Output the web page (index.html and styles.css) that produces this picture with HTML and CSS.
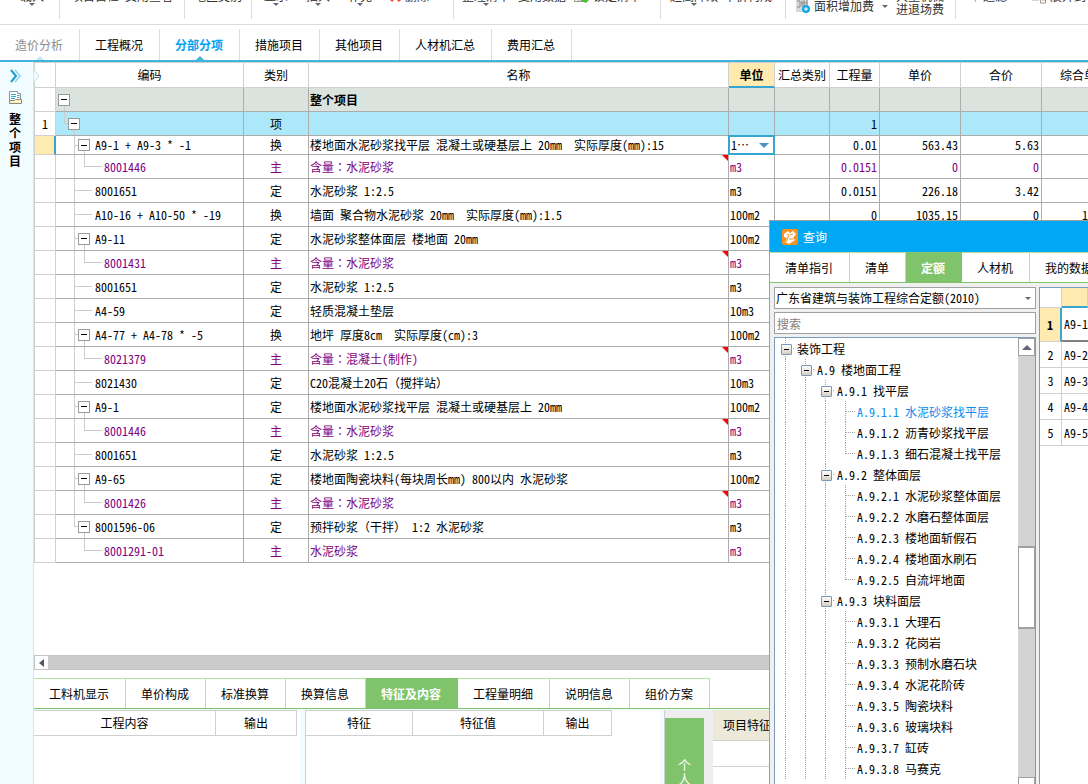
FILE: index.html
```html
<!DOCTYPE html>
<html lang="zh-CN">
<head>
<meta charset="utf-8">
<title>分部分项</title>
<link rel="stylesheet" href="styles.css">
</head>
<body>
<header class="toolbar">
  <div class="group g-import"><button class="tool drop">载入</button></div>
  <div class="group g-check"><button class="tool">项目自检</button><button class="tool">费用查看</button></div>
  <div class="group g-area"><button class="tool">地区类别</button></div>
  <div class="group g-edit"><button class="tool drop">显示</button><button class="tool drop">插入</button><button class="tool drop">补充</button><button class="tool"><svg width="12" height="12" viewBox="0 0 12 12"><path d="M1 1l9 10M10 1L1 11" stroke="#f04a32" stroke-width="3"/></svg>删除</button></div>
  <div class="group g-list"><button class="tool drop">整理清单</button><button class="tool">复用数据</button><button class="tool"><svg width="16" height="13" viewBox="0 0 16 13"><path d="M.5.5h10v11H.5zM.5 8h10M5 0v12" fill="#eee" stroke="#999"/><path d="M7 5h8v5l-3 3-5-2z" fill="#4fbf35"/></svg>锁定清单</button></div>
  <div class="group g-height"><button class="tool drop">超高降效</button><button class="tool">单价构成</button></div>
  <div class="group g-fee">
    <button class="tool low"><svg width="16" height="16" viewBox="0 0 16 16"><path d="M1 0h12v14H1z" fill="#d9d9d9"/><path d="M2 3h3v6H2m5-6v6m2-7v7m3-7v7M6 5h6" stroke="#8b8b8b" fill="none"/><circle cx="11" cy="11" r="4" fill="#10a9e6"/><path d="M11 9v4M9 11h4" stroke="#fff"/></svg>面积增加费</button>
    <i class="caret"></i>
    <button class="tool two">大型机械<br>进退场费</button>
  </div>
  <div class="group g-view"><button class="tool"><svg width="12" height="16" viewBox="0 0 12 16"><path d="M2 4h6v11z" fill="#65d5f3"/></svg>过滤</button><button class="tool"><svg width="16" height="16" viewBox="0 0 16 16"><path d="M1 11h7" stroke="#aaa" stroke-width="3"/><path d="M9.500 3h5v12h-5zM11 12h3" fill="#fff" stroke="#a09888"/></svg>展开到</button></div>
</header>
<nav class="tabs main-tabs">
  <button class="tab visited">造价分析</button><button class="tab">工程概况</button><button class="tab active">分部分项</button><button class="tab">措施项目</button><button class="tab">其他项目</button><button class="tab">人材机汇总</button><button class="tab">费用汇总</button>
</nav>
<div class="workspace">
  <aside class="side">
    <svg width="11" height="14" viewBox="0 0 11 14" fill="none"><path d="M1 1l5 6-5 6" stroke="#1f9fcd" stroke-width="2"/><path d="M5 1l5 6-5 6" stroke="#8ad4ec" stroke-width="1.500"/></svg>
    <svg width="13" height="13" viewBox="0 0 13 13" fill="none"><path d="M.5 9.500v-9h8v2h3v7" fill="#fff" stroke="#8a959a"/><path d="M2 3.500h5M2 5.500h5M2 7.500h4M8 4.500h2.500M8 6.500h2.500" stroke="#35a8d6"/><path d="M.5 9.500h5l1-1h6v4H.5z" fill="#fff2c0" stroke="#8a8a80"/></svg>
    <span class="side-title">整个项目</span>
  </aside>
  <main class="content">
    <section class="grid">
      <svg class="notch" width="6" height="12" viewBox="0 0 6 12"><path d="M0 0l5 6-5 6" fill="#f0fcff" stroke="#ccd8da"/></svg>
      <table class="sheet">
        <colgroup><col class="c-no"><col class="c-code"><col class="c-type"><col><col class="c-unit"><col class="c-sum"><col class="c-qty"><col class="c-price"><col class="c-price"><col class="c-comp"></colgroup>
        <thead><tr><th></th><th>编码</th><th>类别</th><th>名称</th><th class="current">单位</th><th>汇总类别</th><th>工程量</th><th>单价</th><th>合价</th><th>综合单价</th></tr></thead>
        <tbody>
        <tr class="total"><td></td><td><div class="tree"><span class="node root"><button aria-label="折叠"></button></span></div></td><td></td><td>整个项目</td><td></td><td></td><td></td><td></td><td></td><td></td></tr>
        <tr class="item"><td>1</td><td><div class="tree"><span class="pad p0"></span><span class="elbow short"></span><span class="node"><button aria-label="折叠"></button></span></div></td><td>项</td><td></td><td></td><td></td><td>1</td><td></td><td></td><td></td></tr>
        <tr class="editing"><td></td><td><div class="tree"><span class="pad"></span><span class="tee short"></span><span class="node"><button aria-label="折叠"></button></span><span class="code">A9-1 + A9-3 * -1</span></div></td><td>换</td><td>楼地面水泥砂浆找平层 混凝土或硬基层上 20mm  实际厚度(mm):15</td><td class="unit-edit"><select aria-label="单位"><option>1…</option></select></td><td></td><td>0.01</td><td>563.43</td><td>5.63</td><td>563.43</td></tr>
        <tr class="main"><td></td><td><div class="tree"><span class="pad"></span><span class="line"></span><span class="elbow"></span><span class="sub">8001446</span></div></td><td>主</td><td class="flag">含量<span class="mid" lang="zh-TW">：</span>水泥砂浆</td><td>m3</td><td></td><td>0.0151</td><td>0</td><td>0</td><td></td></tr>
        <tr><td></td><td><div class="tree"><span class="pad"></span><span class="tee"></span><span class="code">8001651</span></div></td><td>定</td><td>水泥砂浆 1:2.5</td><td>m3</td><td></td><td>0.0151</td><td>226.18</td><td>3.42</td><td></td></tr>
        <tr><td></td><td><div class="tree"><span class="pad"></span><span class="tee"></span><span class="code">A10-16 + A10-50 * -19</span></div></td><td>换</td><td>墙面 聚合物水泥砂浆 20mm  实际厚度(mm):1.5</td><td>100m2</td><td></td><td>0</td><td>1035.15</td><td>0</td><td>1035.15</td></tr>
        <tr><td></td><td><div class="tree"><span class="pad"></span><span class="tee short"></span><span class="node"><button aria-label="折叠"></button></span><span class="code">A9-11</span></div></td><td>定</td><td>水泥砂浆整体面层 楼地面 20mm</td><td>100m2</td><td></td><td></td><td></td><td></td><td></td></tr>
        <tr class="main"><td></td><td><div class="tree"><span class="pad"></span><span class="line"></span><span class="elbow"></span><span class="sub">8001431</span></div></td><td>主</td><td class="flag">含量<span class="mid" lang="zh-TW">：</span>水泥砂浆</td><td>m3</td><td></td><td></td><td></td><td></td><td></td></tr>
        <tr><td></td><td><div class="tree"><span class="pad"></span><span class="tee"></span><span class="code">8001651</span></div></td><td>定</td><td>水泥砂浆 1:2.5</td><td>m3</td><td></td><td></td><td></td><td></td><td></td></tr>
        <tr><td></td><td><div class="tree"><span class="pad"></span><span class="tee"></span><span class="code">A4-59</span></div></td><td>定</td><td>轻质混凝土垫层</td><td>10m3</td><td></td><td></td><td></td><td></td><td></td></tr>
        <tr><td></td><td><div class="tree"><span class="pad"></span><span class="tee short"></span><span class="node"><button aria-label="折叠"></button></span><span class="code">A4-77 + A4-78 * -5</span></div></td><td>换</td><td>地坪 厚度8cm  实际厚度(cm):3</td><td>100m2</td><td></td><td></td><td></td><td></td><td></td></tr>
        <tr class="main"><td></td><td><div class="tree"><span class="pad"></span><span class="line"></span><span class="elbow"></span><span class="sub">8021379</span></div></td><td>主</td><td class="flag">含量<span class="mid" lang="zh-TW">：</span>混凝土(制作)</td><td>m3</td><td></td><td></td><td></td><td></td><td></td></tr>
        <tr><td></td><td><div class="tree"><span class="pad"></span><span class="tee"></span><span class="code">8021430</span></div></td><td>定</td><td>C20混凝土20石（搅拌站）</td><td>10m3</td><td></td><td></td><td></td><td></td><td></td></tr>
        <tr><td></td><td><div class="tree"><span class="pad"></span><span class="tee short"></span><span class="node"><button aria-label="折叠"></button></span><span class="code">A9-1</span></div></td><td>定</td><td>楼地面水泥砂浆找平层 混凝土或硬基层上 20mm</td><td>100m2</td><td></td><td></td><td></td><td></td><td></td></tr>
        <tr class="main"><td></td><td><div class="tree"><span class="pad"></span><span class="line"></span><span class="elbow"></span><span class="sub">8001446</span></div></td><td>主</td><td class="flag">含量<span class="mid" lang="zh-TW">：</span>水泥砂浆</td><td>m3</td><td></td><td></td><td></td><td></td><td></td></tr>
        <tr><td></td><td><div class="tree"><span class="pad"></span><span class="tee"></span><span class="code">8001651</span></div></td><td>定</td><td>水泥砂浆 1:2.5</td><td>m3</td><td></td><td></td><td></td><td></td><td></td></tr>
        <tr><td></td><td><div class="tree"><span class="pad"></span><span class="tee short"></span><span class="node"><button aria-label="折叠"></button></span><span class="code">A9-65</span></div></td><td>定</td><td>楼地面陶瓷块料(每块周长mm) 800以内 水泥砂浆</td><td>100m2</td><td></td><td></td><td></td><td></td><td></td></tr>
        <tr class="main"><td></td><td><div class="tree"><span class="pad"></span><span class="line"></span><span class="elbow"></span><span class="sub">8001426</span></div></td><td>主</td><td class="flag">含量<span class="mid" lang="zh-TW">：</span>水泥砂浆</td><td>m3</td><td></td><td></td><td></td><td></td><td></td></tr>
        <tr><td></td><td><div class="tree"><span class="pad"></span><span class="elbow short"></span><span class="node"><button aria-label="折叠"></button></span><span class="code">8001596-06</span></div></td><td>定</td><td>预拌砂浆（干拌） 1:2 水泥砂浆</td><td>m3</td><td></td><td></td><td></td><td></td><td></td></tr>
        <tr class="main"><td></td><td><div class="tree"><span class="pad"></span><span class="line none"></span><span class="elbow"></span><span class="sub">8001291-01</span></div></td><td>主</td><td>水泥砂浆</td><td>m3</td><td></td><td></td><td></td><td></td><td></td></tr>
        </tbody>
      </table>
    </section>
    <div class="hscroll"><button aria-label="向左"><svg width="5" height="8" viewBox="0 0 5 8"><path d="M5 0v8L0 4z" fill="#556"/></svg></button></div>
    <nav class="tabs green-tabs detail-tabs">
      <button class="tab">工料机显示</button><button class="tab">单价构成</button><button class="tab">标准换算</button><button class="tab">换算信息</button><button class="tab active">特征及内容</button><button class="tab">工程量明细</button><button class="tab">说明信息</button><button class="tab">组价方案</button>
    </nav>
    <section class="panels">
      <div class="panel p-work"><table class="mini"><thead><tr><th class="w-content">工程内容</th><th class="w-out">输出</th></tr></thead></table></div>
      <div class="panel p-feature"><table class="mini"><thead><tr><th class="w-name">特征</th><th class="w-value">特征值</th><th class="w-out2">输出</th></tr></thead></table></div>
      <div class="panel p-rail"><button class="rail">个人</button></div>
      <div class="panel p-desc"><div class="desc-head">项目特征</div><div class="desc-row"></div></div>
    </section>
  </main>
</div>
<section class="dialog" role="dialog" aria-label="查询">
  <header class="dialog-title"><svg width="16" height="16" viewBox="0 0 16 16"><rect width="16" height="16" rx="2" fill="#f7931e"/><path d="M2 5l4-3 2 2 3-2 3 3-3 4 2 2-6 4-4-2 2-4-3-1z" fill="#fff"/><path d="M5 5l2 1-3 7M8 6l3-1M7 10h4" stroke="#f7931e" fill="none"/></svg><span>查询</span></header>
  <nav class="tabs green-tabs dialog-tabs">
    <button class="tab">清单指引</button><button class="tab">清单</button><button class="tab active">定额</button><button class="tab">人材机</button><button class="tab">我的数据</button>
  </nav>
  <div class="dialog-body">
    <div class="finder">
      <div class="book-wrap"><select class="book" aria-label="定额库"><option>广东省建筑与装饰工程综合定额(2010)</option></select></div>
      <input class="search" type="text" placeholder="搜索" aria-label="搜索">
      <div class="catalog">
        <ul class="cat-list">
          <li><b class="x first"></b><span>装饰工程</span></li>
          <li><b class="v"></b><b class="x"></b><span>A.9 楼地面工程</span></li>
          <li><b class="v"></b><b class="v"></b><b class="x"></b><span>A.9.1 找平层</span></li>
          <li class="sel"><b class="v"></b><b class="v"></b><b class="v"></b><b class="t"></b><span>A.9.1.1 水泥砂浆找平层</span></li>
          <li><b class="v"></b><b class="v"></b><b class="v"></b><b class="t"></b><span>A.9.1.2 沥青砂浆找平层</span></li>
          <li><b class="v"></b><b class="v"></b><b class="v"></b><b class="e"></b><span>A.9.1.3 细石混凝土找平层</span></li>
          <li><b class="v"></b><b class="v"></b><b class="x"></b><span>A.9.2 整体面层</span></li>
          <li><b class="v"></b><b class="v"></b><b class="v"></b><b class="t"></b><span>A.9.2.1 水泥砂浆整体面层</span></li>
          <li><b class="v"></b><b class="v"></b><b class="v"></b><b class="t"></b><span>A.9.2.2 水磨石整体面层</span></li>
          <li><b class="v"></b><b class="v"></b><b class="v"></b><b class="t"></b><span>A.9.2.3 楼地面斩假石</span></li>
          <li><b class="v"></b><b class="v"></b><b class="v"></b><b class="t"></b><span>A.9.2.4 楼地面水刷石</span></li>
          <li><b class="v"></b><b class="v"></b><b class="v"></b><b class="e"></b><span>A.9.2.5 自流坪地面</span></li>
          <li><b class="v"></b><b class="v"></b><b class="x"></b><span>A.9.3 块料面层</span></li>
          <li><b class="v"></b><b class="v"></b><b class="v"></b><b class="t"></b><span>A.9.3.1 大理石</span></li>
          <li><b class="v"></b><b class="v"></b><b class="v"></b><b class="t"></b><span>A.9.3.2 花岗岩</span></li>
          <li><b class="v"></b><b class="v"></b><b class="v"></b><b class="t"></b><span>A.9.3.3 预制水磨石块</span></li>
          <li><b class="v"></b><b class="v"></b><b class="v"></b><b class="t"></b><span>A.9.3.4 水泥花阶砖</span></li>
          <li><b class="v"></b><b class="v"></b><b class="v"></b><b class="t"></b><span>A.9.3.5 陶瓷块料</span></li>
          <li><b class="v"></b><b class="v"></b><b class="v"></b><b class="t"></b><span>A.9.3.6 玻璃块料</span></li>
          <li><b class="v"></b><b class="v"></b><b class="v"></b><b class="t"></b><span>A.9.3.7 缸砖</span></li>
          <li><b class="v"></b><b class="v"></b><b class="v"></b><b class="t"></b><span>A.9.3.8 马赛克</span></li>
        </ul>
        <div class="vscroll"><button aria-label="向上"><svg width="10" height="5" viewBox="0 0 10 5"><path d="M0 5h10L5 0z" fill="#667"/></svg></button><div class="track-a"></div><div class="thumb"></div><div class="track-b"></div><button class="down" aria-label="向下"></button></div>
      </div>
    </div>
    <div class="results">
      <table class="result-table">
        <thead><tr><th></th><th class="key"></th></tr></thead>
        <tbody>
          <tr class="picked"><td>1</td><td>A9-1</td></tr>
          <tr><td>2</td><td>A9-2</td></tr>
          <tr><td>3</td><td>A9-3</td></tr>
          <tr><td>4</td><td>A9-4</td></tr>
          <tr><td>5</td><td>A9-5</td></tr>
        </tbody>
      </table>
    </div>
  </div>
</section>
</body>
</html>
```
FILE: styles.css
```css
* { box-sizing: border-box; }

:root {
  --grid: #acacac;
  --light: #d0d0d0;
  --blue: #3fb4dc;
  --edit: #37a5d0;
  --green: #7fc46a;
  --pale-green: #b5e3a0;
  --yellow: #ffebb0;
}

body {
  margin: 0;
  height: 100vh;
  overflow: hidden;
  display: flex;
  flex-direction: column;
  position: relative;
  background: #fff;
  color: #000;
  font: 12px/14px "Noto Sans Mono CJK SC", "Noto Sans CJK SC", sans-serif;
}

button, select, input { font: inherit; color: inherit; border-radius: 0; }
button { border: 0; padding: 0; background: none; white-space: nowrap; }
svg { display: block; flex: none; }
table { border-collapse: separate; border-spacing: 0; }

/* toolbar */
.toolbar { flex: none; display: flex; height: 25px; overflow: hidden; border-bottom: 1px solid #dcdcdc; color: #333; }
.group { flex: none; display: flex; align-items: flex-start; height: 19px; border-right: 1px solid #dcdcdc; gap: 6px; padding-left: 11px; }
.g-import { width: 60px; padding-left: 20px; }
.g-check { width: 125px; }
.g-area { width: 67px; padding-left: 9px; }
.g-edit { width: 202px; gap: 18px; padding-left: 12px; }
.g-list { width: 207px; padding-left: 8px; gap: 8px; }
.g-height { width: 125px; padding-left: 9px; }
.g-fee { width: 170px; gap: 8px; padding-left: 9px; }
.g-view { border: 0; gap: 24px; padding-left: 12px; }
.tool { display: flex; align-items: center; gap: 3px; position: relative; height: 14px; margin-top: -11px; }
.tool.low { height: 16px; margin-top: -2px; }
.tool.two { display: block; height: auto; margin-top: -11px; line-height: 13px; }
.drop::after, .caret { content: ""; border: 3px solid transparent; border-top-color: #667; border-bottom: 0; }
.drop::after { position: absolute; left: calc(50% - 3px); top: 14px; }
.caret { margin-top: 5px; }

/* tab strips */
.tabs { flex: none; display: flex; }
.tab { position: relative; padding: 0 16px 0 15px; border-right: 1px solid #dcdcdc; }
.main-tabs { height: 37px; padding-top: 4px; border-bottom: 2px solid var(--blue); }
.main-tabs .visited { color: #8a8a8a; }
.main-tabs .active { color: #00a2f0; font-weight: bold; }
.main-tabs .visited::after, .main-tabs .active::after {
  content: ""; position: absolute; left: calc(50% - 4px); bottom: 0;
  border: 4px solid transparent; border-top: 0; border-bottom-color: #c0e6f3;
}
.main-tabs .active::after { border-bottom-color: var(--blue); }
.green-tabs { height: 31px; border-bottom: 1px solid var(--green); }
.green-tabs .tab { border-top: 1px solid var(--pale-green); border-right-color: var(--pale-green); }
.green-tabs .active { background: var(--green); border-color: var(--green); color: #fff; font-weight: bold; }

/* workspace */
.workspace { flex: 1; min-height: 0; display: flex; }
.side { flex: none; width: 34px; display: flex; flex-direction: column; align-items: center; gap: 8px; padding: 7px 3px 0 0; background: #f0fcff; border-right: 1px solid #dde4e6; }
.side-title { width: 12px; font-weight: bold; word-break: break-all; white-space: normal; }
.content { flex: 1; min-width: 0; display: flex; flex-direction: column; }
.grid { position: relative; flex: 1; min-height: 0; overflow: hidden; }
.notch { position: absolute; left: 0; top: 8px; }

/* bill of quantities */
.sheet { width: calc(100% + 39px); table-layout: fixed; border-top: 1px solid var(--light); white-space: pre; }
.c-no { width: 22px; }
.c-code { width: 188px; }
.c-type { width: 65px; }
.c-unit { width: 46px; }
.c-sum { width: 55px; }
.c-qty { width: 50px; }
.c-price { width: 81px; }
.c-comp { width: 85px; }
.sheet th, .sheet td { padding: 0; border: 0 solid var(--grid); border-width: 0 1px 1px 0; overflow: hidden; }
.sheet th { height: 25px; font-weight: normal; border-color: var(--light); }
.sheet th.current { background: var(--yellow); font-weight: bold; border-bottom: 2px solid var(--edit); }
.sheet td { height: 24px; }
.sheet th:first-child, .sheet td:first-child { border-left: 1px solid var(--light); border-color: var(--light); text-align: center; }
.sheet td:nth-child(3) { text-align: center; }
.sheet td:nth-child(4), .sheet td:nth-child(5) { padding-left: 1px; }
.sheet td:nth-child(n+7) { text-align: right; padding-right: 2px; }
.total td:nth-child(n+2) { background: #dae3de; font-weight: bold; }
.item td:nth-child(n+2) { background: #ade8fa; }
.sheet .editing td { height: 19px; }
.sheet .editing td:first-child { background: var(--yellow); border-right: 2px solid var(--edit); }
.main { color: #800080; }
.mid { font-family: "Noto Sans Mono CJK TC", "Noto Sans CJK TC", sans-serif; }
.flag { position: relative; }
.flag::after { content: ""; position: absolute; right: 0; top: 0; border: 3px solid transparent; border-top-color: #f00; border-right-color: #f00; }
.sheet td.unit-edit { position: relative; z-index: 1; padding: 0; overflow: visible; }
.unit-edit select {
  display: block; width: 100%; height: 18px; border: 0; padding: 0 14px 0 2px; appearance: none; background: #fff;
  outline: 2px solid var(--edit); outline-offset: -1px;
}
.unit-edit::after { content: ""; position: absolute; right: 5px; top: 7px; border: 5px solid transparent; border-top-color: #4c93c4; border-bottom: 0; }

.tree { display: flex; align-items: center; height: 23px; }
.editing .tree { height: 18px; }
.pad { width: 18px; }
.pad.p0 { width: 8px; }
.tree .line, .tree .tee, .tree .elbow, .tree .node { flex: none; align-self: stretch; background-repeat: no-repeat; }
.line { width: 10px; background-image: linear-gradient(#ccc, #ccc); background-size: 1px 100%; }
.line.none { background-image: none; }
.tee, .elbow { width: 18px; background-image: linear-gradient(#ccc, #ccc), linear-gradient(#ccc, #ccc); background-position: 0 0, 0 50%; }
.tee { background-size: 1px 100%, 100% 1px; }
.elbow { background-size: 1px 50%, 100% 1px; }
.short { width: 4px; }
.node { display: flex; align-items: center; width: 12px; background-image: linear-gradient(#ccc, #ccc); background-size: 1px 50%; background-position: 6px 100%; }
.node.root { margin-left: 2px; }
.node button { width: 12px; height: 12px; border: 1px solid #999; background: linear-gradient(#000, #000) center / 6px 1px no-repeat #fff; }
.code { padding-left: 3px; }
.node + .code { padding-left: 5px; }
.sub { padding-left: 2px; }

.hscroll { flex: none; height: 15px; border: 1px solid #c4c4c4; background: #cbcbcb; }
.hscroll button { display: flex; align-items: center; justify-content: center; width: 13px; height: 13px; background: #fff; }
.detail-tabs { margin-top: 8px; }

/* detail panels */
.panels { flex: none; display: flex; height: 75px; padding-top: 1px; background: #f0fcff; }
.panel { flex: none; background: #fff; }
.mini { border-top: 1px solid var(--light); }
.mini th { height: 25px; padding: 0; font-weight: normal; border: 0 solid var(--light); border-width: 0 1px 1px 0; }
.p-work { width: 266px; }
.p-feature { width: 355px; margin-left: 5px; border-left: 1px solid var(--light); }
.w-content { width: 182px; }
.w-out { width: 81px; }
.w-name { width: 107px; }
.w-value { width: 131px; }
.w-out2 { width: 68px; }
.p-rail { width: 49px; margin-left: 4px; padding-top: 8px; background: #ededed; border-left: 1px solid var(--light); }
.rail { display: flex; justify-content: center; width: 39px; height: 100%; padding: 40px 13px 0; background: var(--green); color: #fff; white-space: normal; word-break: break-all; font-size: 13px; }
.p-desc { flex: 1; background: #fff; }
.desc-head { padding: 8px 0 8px 10px; background: #ece9d8; border-bottom: 1px solid var(--light); }
.desc-row { height: 26px; border-bottom: 1px solid var(--light); }

/* query window */
.dialog { position: absolute; left: 769px; right: 0; top: 220px; bottom: 0; display: flex; flex-direction: column; overflow: hidden; background: #f0f0f0; border: 1px solid #a0a0a0; border-width: 1px 0 0 1px; }
.dialog-title { flex: none; display: flex; align-items: center; gap: 5px; height: 31px; padding-left: 12px; background: #00a8f3; color: #fff; }
.dialog-tabs { background: #fff; }
.dialog-tabs .tab:last-child { border-right: 0; }
.dialog-body { flex: 1; min-height: 0; display: flex; gap: 3px; padding: 4px 0 0 4px; }
.finder { flex: none; width: 262px; display: flex; flex-direction: column; gap: 3px; }
.book-wrap { position: relative; flex: none; }
.book-wrap::after { content: ""; position: absolute; right: 5px; top: 10px; border: 3px solid transparent; border-top-color: #667; border-bottom: 0; }
.book, .search { display: block; flex: none; width: 100%; height: 22px; padding: 0 2px; border: 1px solid #a0a0a0; background: #fff; outline: 0; }
.book { appearance: none; padding-left: 1px; }
.search::placeholder { color: #808080; opacity: 1; }
.catalog { flex: 1; min-height: 0; display: flex; overflow: hidden; border: 1px solid #7a9cbf; border-bottom: 0; background: #fff; }
.cat-list { flex: 1; margin: 0; padding: 0; list-style: none; }
.cat-list li { display: flex; align-items: center; height: 21px; white-space: nowrap; }
.cat-list span { padding-left: 2px; }
.sel { color: #0a8cf0; }
.cat-list b { flex: none; position: relative; align-self: stretch; width: 20px; }
.cat-list b::before { content: ""; position: absolute; left: 10px; top: 0; bottom: 0; border-left: 1px dotted #a0a0a0; }
.cat-list .e::before { bottom: 50%; }
.cat-list .t::after, .cat-list .e::after { content: ""; position: absolute; left: 11px; right: 0; top: 10px; border-top: 1px dotted #a0a0a0; }
.cat-list .x { background: repeating-linear-gradient(90deg, #a0a0a0 0 1px, transparent 1px 2px) 16px 10px / 4px 1px no-repeat; }
.cat-list .x::after { content: ""; position: absolute; left: 6px; top: 6px; width: 9px; height: 9px; border: 1px solid #7a98b5; border-radius: 1px; background: linear-gradient(#000, #000) center / 5px 1px no-repeat, linear-gradient(#fff, #d5cfc3); }
.vscroll { flex: none; width: 17px; display: flex; flex-direction: column; background: #d3d3d3; }
.vscroll button { flex: none; height: 18px; display: flex; align-items: center; justify-content: center; border: 1px solid #a0a0a0; background: #fff; }
.track-a { flex: 192 1 0; }
.thumb { flex: 80 1 0; border: 1px solid #a0a0a0; border-width: 2px 1px; background: #fff; }
.track-b { flex: 149 1 0; }
.vscroll .down { height: 7px; border-bottom: 0; }
.results { flex: 1; min-width: 0; overflow: hidden; border: 1px solid #7a9cbf; border-width: 1px 0 0 1px; background: #fff; }
.result-table { width: 100%; table-layout: fixed; }
.result-table th, .result-table td { height: 26px; padding: 0; border: 0 solid var(--light); border-width: 0 1px 1px 0; }
.result-table th { height: 20px; }
.result-table th:first-child, .result-table td:first-child { width: 22px; text-align: center; }
.result-table td:last-child { padding-left: 2px; border-right: 0; }
.result-table .key { background: var(--yellow); border-bottom: 2px solid var(--edit); }
.result-table .picked td { height: 34px; border-bottom: 2px solid #808080; }
.result-table .picked td:first-child { background: var(--yellow); border-right: 2px solid var(--edit); border-bottom: 1px solid var(--light); font-weight: bold; }
```
